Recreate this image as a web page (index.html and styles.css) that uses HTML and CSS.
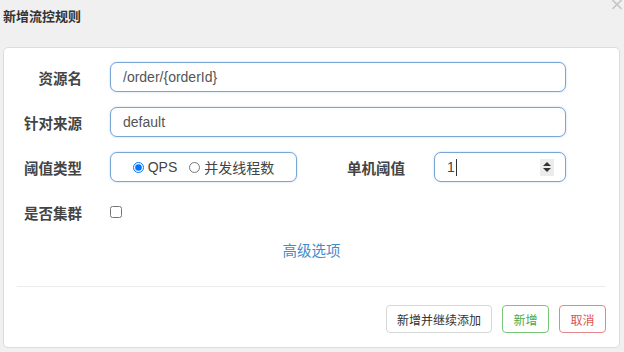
FILE: index.html
```html
<!DOCTYPE html>
<html lang="zh-CN">
  <head>
    <meta charset="UTF-8" />
    <meta name="viewport" content="width=device-width, initial-scale=1.0" />
    <title>新增流控规则</title>
    <link rel="stylesheet" href="styles.css">
  </head>
  <body>
    <div class="header">
      <h3 class="title">新增流控规则</h3>
      <span class="close">
        <svg width="10" height="10" viewBox="0 0 10 10">
          <path d="M0.5 0 L9.5 9 M9.5 0 L0.5 9" stroke="#c6c6c6" stroke-width="1.6"/>
        </svg>
      </span>
    </div>
    <div class="card">
      <div class="form">
        <div class="row">
          <label class="label">资源名</label>
          <input class="field wide" type="text" value="/order/{orderId}">
        </div>
        <div class="row">
          <label class="label">针对来源</label>
          <input class="field wide" type="text" value="default">
        </div>
        <div class="row">
          <label class="label">阈值类型</label>
          <div class="field radios">
            <label class="radio"><input type="radio" name="grade" checked> QPS</label>
            <label class="radio"><input type="radio" name="grade"> 并发线程数</label>
          </div>
          <label class="label label-mid">单机阈值</label>
          <div class="field number">
            <span class="value">1</span><span class="caret"></span>
            <span class="spin">
              <svg width="8" height="12" viewBox="0 0 8 12">
                <path d="M0 5 L4 1 L8 5 Z M0 7 L4 11 L8 7 Z" fill="#333"/>
              </svg>
            </span>
          </div>
        </div>
        <div class="row">
          <label class="label">是否集群</label>
          <input class="check" type="checkbox">
        </div>
        <div class="more"><a href="#">高级选项</a></div>
      </div>
      <hr class="line">
      <div class="footer">
        <button class="btn">新增并继续添加</button>
        <button class="btn btn-ok">新增</button>
        <button class="btn btn-cancel">取消</button>
      </div>
    </div>
  </body>
</html>
```

FILE: styles.css
```css
body {
  font-family: "Liberation Sans", "Noto Sans CJK SC", sans-serif;
  background-color: #f0f0f0;
  margin: 0;
  padding: 0;
  color: #333;
}
.header {
  display: flex;
  justify-content: space-between;
  align-items: flex-start;
  height: 47px;
  padding: 0 2px 0 3px;
}
.title {
  margin: 8px 0 0 0;
  font-size: 13px;
  line-height: 18px;
  font-weight: bold;
  color: #333;
}
.close {
  display: flex;
  margin-top: 0;
}
.card {
  margin: 0 4px 4px 3px;
  background: #fff;
  border: 1px solid #dcdcdc;
  border-radius: 5px;
  padding: 14px 13px 14px 13px;
  height: 301px;
  box-sizing: border-box;
}
.form {
  display: flex;
  flex-direction: column;
  gap: 15px;
}
.row {
  display: flex;
  align-items: center;
  height: 30px;
}
.label {
  width: 65px;
  margin-right: 28px;
  text-align: right;
  font-size: 14.5px;
  font-weight: bold;
  color: #444;
  white-space: nowrap;
}
.label-mid {
  width: 108px;
  margin-right: 29px;
}
.field {
  height: 30px;
  box-sizing: border-box;
  border: 1px solid #7aa6d6;
  border-radius: 7px;
  box-shadow: 0 0 2px rgba(102, 160, 220, 0.5);
  font-family: inherit;
  font-size: 14px;
  color: #555;
  background: #fff;
  outline: none;
}
.wide {
  width: 456px;
  padding: 0 12px;
}
.radios {
  width: 187px;
  display: flex;
  align-items: center;
  justify-content: center;
  gap: 12px;
}
.radio {
  display: flex;
  align-items: center;
  font-size: 14px;
  color: #444;
}
.radio input {
  margin: 0 4px 0 0;
  width: 11px;
  height: 11px;
}
.number {
  width: 132px;
  display: flex;
  align-items: center;
  padding: 0 11px 0 12px;
}
.value {
  color: #444;
}
.caret {
  width: 1px;
  height: 17px;
  background: #333;
  margin-left: 1px;
}
.spin {
  margin-left: auto;
  width: 14px;
  height: 17px;
  background: #ececec;
  display: flex;
  align-items: center;
  justify-content: center;
}
.check {
  margin: 0;
  width: 12px;
  height: 12px;
}
.more {
  text-align: center;
  margin-top: -1px;
  font-size: 14.5px;
  line-height: 20px;
}
.more a {
  color: #3f8ccb;
  text-decoration: none;
}
.line {
  border: none;
  border-top: 1px solid #ececec;
  margin: 25px 0 0 0;
}
.footer {
  display: flex;
  justify-content: flex-end;
  gap: 10px;
  margin-top: 18px;
}
.btn {
  height: 28px;
  padding: 0 10px;
  font-family: inherit;
  font-size: 12px;
  color: #333;
  background: #fff;
  border: 1px solid #d6d6d6;
  border-radius: 4px;
  cursor: pointer;
}
.btn-ok {
  width: 47px;
  color: #4caa4c;
  border-color: #77c777;
}
.btn-cancel {
  width: 47px;
  color: #d9534f;
  border-color: #e5868a;
}
```
